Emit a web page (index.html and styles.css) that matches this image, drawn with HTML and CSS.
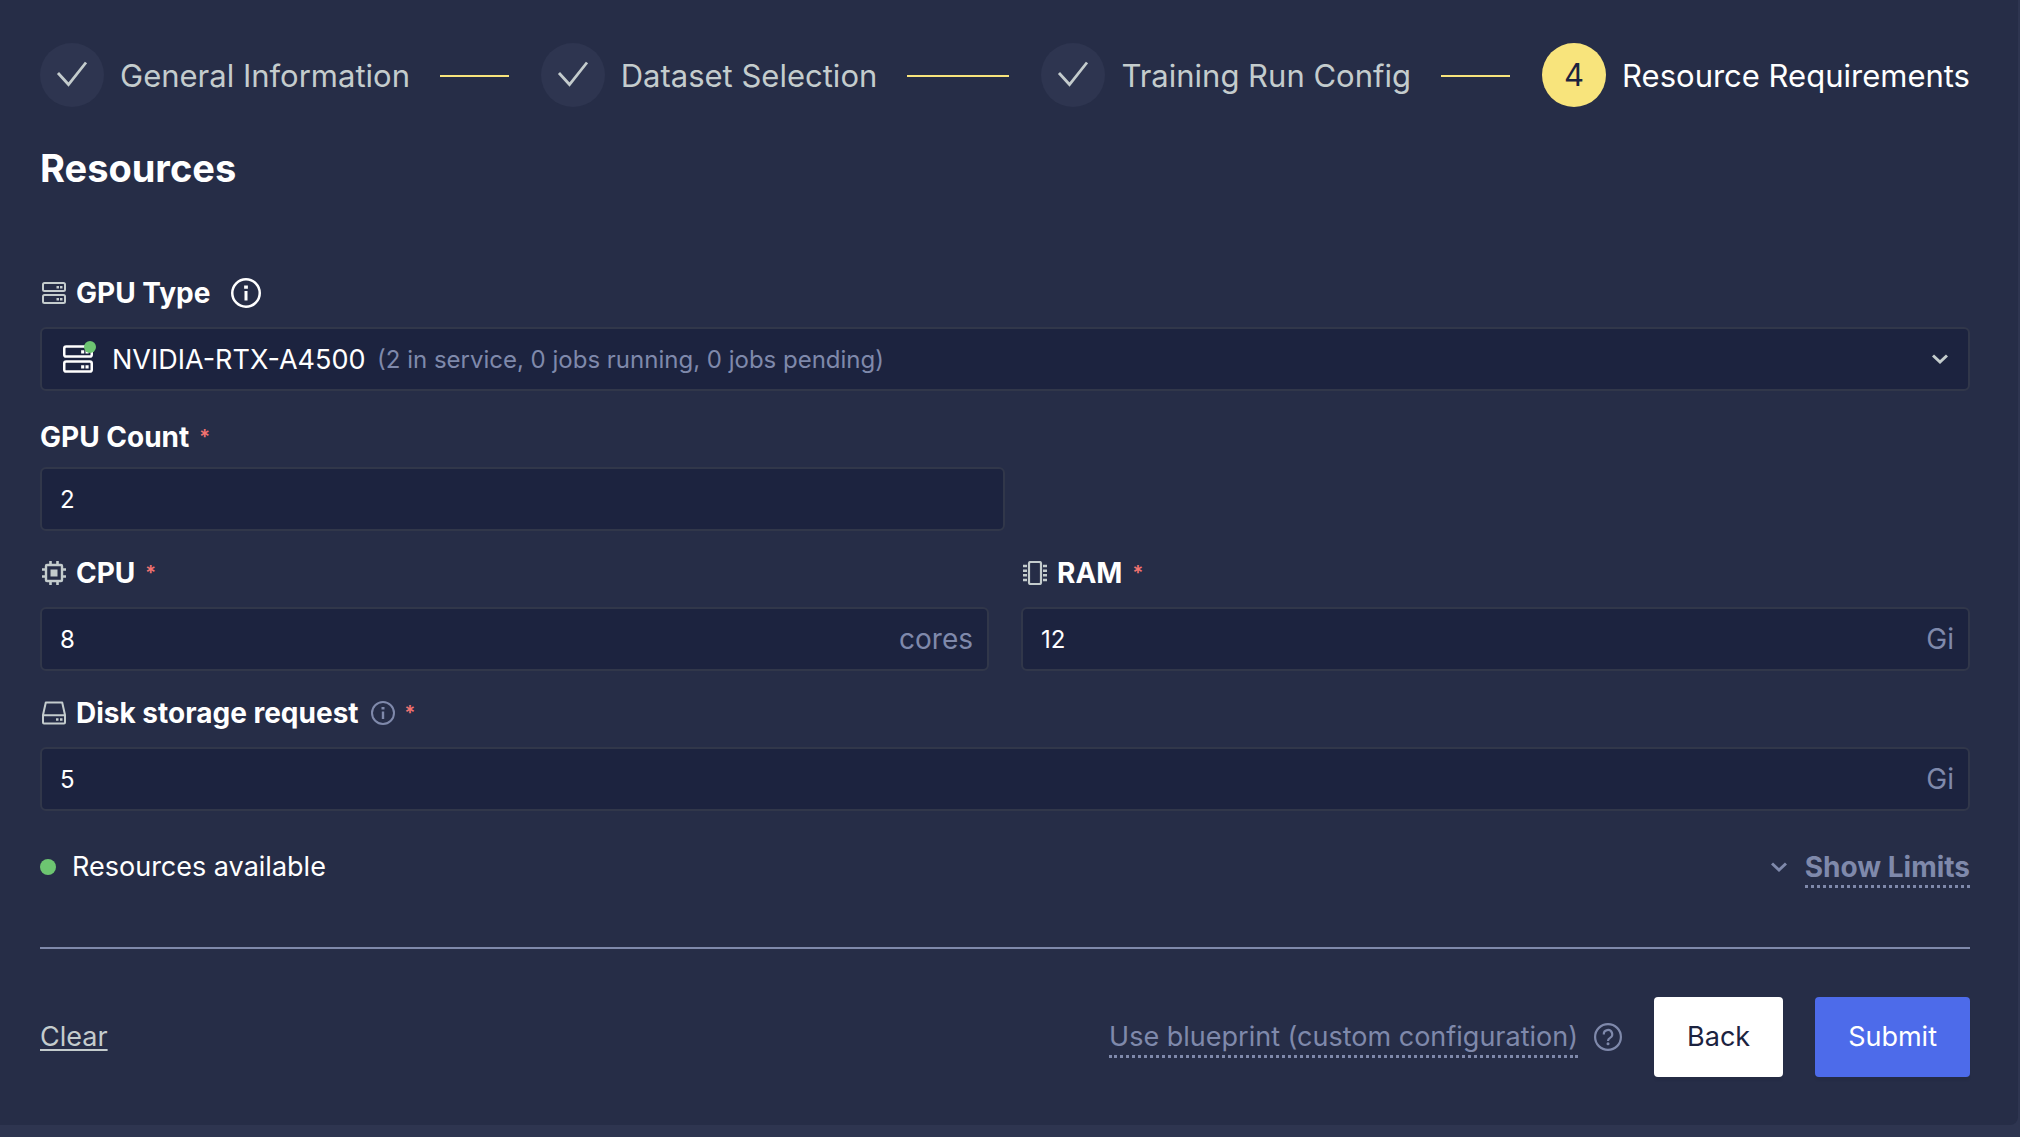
FILE: index.html
```html
<!DOCTYPE html>
<html lang="en">
<head>
<meta charset="utf-8">
<title>Resource Requirements</title>
<link rel="stylesheet" href="styles.css">
</head>
<body>
<svg class="sprite" aria-hidden="true">
  <symbol id="check" viewBox="0 0 32 32"><path d="M2 14 12.500 25.500 30 3.500" fill="none" stroke="currentColor" stroke-width="2.800"/></symbol>
  <symbol id="server" viewBox="0 0 24 24"><g fill="none" stroke="currentColor" stroke-width="2"><rect x="1" y="2" width="22" height="8" rx="1.500"/><rect x="1" y="14" width="22" height="8" rx="1.500"/></g><path fill="currentColor" d="M14.500 5h2.500v2.500h-2.500zM18 5h2.500v2.500H18zM14.500 17h2.500v2.500h-2.500zM18 17h2.500v2.500H18z"/></symbol>
  <symbol id="info" viewBox="0 0 24 24"><circle cx="12" cy="12" r="11" fill="none" stroke="currentColor" stroke-width="2"/><path fill="currentColor" d="M10.500 6h3v2.500h-3zM10.800 10.400h2.400V18h-2.400z"/></symbol>
  <symbol id="cpu" viewBox="0 0 24 24"><rect x="4" y="4" width="16" height="16" rx="1" fill="none" stroke="currentColor" stroke-width="2.400"/><path fill="currentColor" d="M8.500 8.500h7v7h-7z"/><path d="M8.500 0v4M15.500 0v4M8.500 20v4M15.500 20v4M0 8.500h4M0 15.500h4M20 8.500h4M20 15.500h4" stroke="currentColor" stroke-width="2.600"/></symbol>
  <symbol id="ram" viewBox="0 0 24 24"><rect x="6" y="1" width="12" height="22" rx="1.500" fill="none" stroke="currentColor" stroke-width="2.200"/><path d="M0 5h4M0 9.700h4M0 14.300h4M0 19h4M20 5h4M20 9.700h4M20 14.300h4M20 19h4" stroke="currentColor" stroke-width="2.400"/></symbol>
  <symbol id="disk" viewBox="0 0 24 24"><path d="M3.800 1.500h16.400L23 14v7.500a1 1 0 0 1-1 1H2a1 1 0 0 1-1-1V14zM1 14.300h22" fill="none" stroke="currentColor" stroke-width="2" stroke-linejoin="round"/><path fill="currentColor" d="M14 17.200h2.500v2.500H14zM18 17.200h2.500v2.500H18z"/></symbol>
  <symbol id="chevron" viewBox="0 0 16 16"><path d="M1 4.500 8 11l7-6.500" fill="none" stroke="currentColor" stroke-width="3"/></symbol>
  <symbol id="help" viewBox="0 0 28 28"><circle cx="14" cy="14" r="12.900" fill="none" stroke="currentColor" stroke-width="2.200"/><path d="M9.800 11.500a4.200 4.200 0 1 1 6.200 3.400q-2 1-2 3" fill="none" stroke="currentColor" stroke-width="2.200"/><circle cx="14" cy="20.800" r="1.500" fill="currentColor"/></symbol>
</svg>
<main class="card">
  <ol class="steps">
    <li class="step"><span class="badge"><svg class="i32"><use href="#check"/></svg></span><span>General Information</span></li>
    <li class="step"><span class="badge"><svg class="i32"><use href="#check"/></svg></span><span>Dataset Selection</span></li>
    <li class="step"><span class="badge"><svg class="i32"><use href="#check"/></svg></span><span>Training Run Config</span></li>
    <li class="step current" aria-current="step"><span class="badge">4</span><span>Resource Requirements</span></li>
  </ol>
  <h1>Resources</h1>
  <form>
    <div class="field">
      <div class="label"><svg class="i24"><use href="#server"/></svg><label for="gpu-type">GPU Type</label><svg class="i30"><use href="#info"/></svg></div>
      <div class="box select">
        <span class="gpu"><svg class="i30"><use href="#server"/></svg><i class="online"></i></span>
        <select id="gpu-type"><option>NVIDIA-RTX-A4500</option></select>
        <span class="meta">(2 in service, 0 jobs running, 0 jobs pending)</span>
        <svg class="i16 caret"><use href="#chevron"/></svg>
      </div>
    </div>
    <div class="field half">
      <div class="label"><label for="gpu-count">GPU Count</label><span class="req">*</span></div>
      <div class="box"><input id="gpu-count" type="text" inputmode="numeric" value="2"></div>
    </div>
    <div class="pair">
      <div class="field">
        <div class="label"><svg class="i24"><use href="#cpu"/></svg><label for="cpu-cores">CPU</label><span class="req">*</span></div>
        <div class="box"><input id="cpu-cores" type="text" inputmode="numeric" value="8"><span class="unit">cores</span></div>
      </div>
      <div class="field">
        <div class="label"><svg class="i24"><use href="#ram"/></svg><label for="ram-size">RAM</label><span class="req">*</span></div>
        <div class="box"><input id="ram-size" type="text" inputmode="numeric" value="12"><span class="unit">Gi</span></div>
      </div>
    </div>
    <div class="field">
      <div class="label"><svg class="i24"><use href="#disk"/></svg><label for="disk-size">Disk storage request</label><svg class="i24 dim"><use href="#info"/></svg><span class="req">*</span></div>
      <div class="box"><input id="disk-size" type="text" inputmode="numeric" value="5"><span class="unit">Gi</span></div>
    </div>
    <div class="status">
      <span class="available"><i class="dot"></i>Resources available</span>
      <button type="button" class="limits"><svg class="i16"><use href="#chevron"/></svg><span class="dotted">Show Limits</span></button>
    </div>
    <div class="actions">
      <a class="clear" href="#">Clear</a>
      <a class="dotted" href="#">Use blueprint (custom configuration)</a>
      <svg class="i28 help"><use href="#help"/></svg>
      <button type="button" class="btn back">Back</button>
      <button type="submit" class="btn submit">Submit</button>
    </div>
  </form>
</main>
</body>
</html>
```
FILE: styles.css
```css
* { box-sizing: border-box; }
body {
  margin: 0;
  background: #2e3550;
  color: #fff;
  font: 27px/44px Inter, "Liberation Sans", sans-serif;
}
svg { flex: none; display: block; }
.sprite { display: none; }
.i16 { width: 16px; height: 16px; }
.i24 { width: 24px; height: 24px; }
.i28 { width: 28px; height: 28px; }
.i30 { width: 30px; height: 30px; }
.i32 { width: 32px; height: 32px; }

.card {
  margin-right: 2px;
  padding: 43px 48px 48px 40px;
  background: #262d47;
  border-bottom-right-radius: 8px;
}

.steps {
  display: flex;
  margin: 0;
  padding: 0;
  list-style: none;
  font-size: 31px;
  color: #c4cccd;
}
.step {
  flex: 1 1 0;
  display: flex;
  align-items: center;
  gap: 16px;
  white-space: nowrap;
}
.step::after {
  content: "";
  flex: 1;
  height: 2px;
  margin: 2px 32px 0 14px;
  background: #f8e47c;
}
.step > span:last-child { padding-top: 2px; }
.step.current { flex: none; color: #fff; }
.step.current::after { display: none; }
.badge {
  display: flex;
  align-items: center;
  justify-content: center;
  width: 64px;
  height: 64px;
  border-radius: 50%;
  background: #2e3550;
}
.current .badge { background: #f8e47c; color: #1c233f; }

h1 { margin: 33px 0 75px; font-size: 38px; line-height: 56px; font-weight: 700; }

.label {
  display: flex;
  align-items: center;
  gap: 10px;
  height: 44px;
  margin-bottom: 12px;
  padding-left: 2px;
  font-size: 28px;
  font-weight: 700;
}
.label > svg { color: #c4cccd; }
.label > .i30 { margin-left: 11px; color: #fff; }
.label > .dim { margin-left: 2px; color: #7f89ab; }
.req { color: #f37370; font-size: 20px; font-weight: 600; }
.field { margin-bottom: 20px; }
.half { width: 50%; margin-top: 24px; }
.half .label { margin-bottom: 8px; padding-left: 0; }
.pair { display: grid; grid-template-columns: 1fr 1fr; gap: 32px; }

.box {
  display: flex;
  align-items: center;
  height: 64px;
  padding: 0 14px 0 18px;
  border: 2px solid #31374a;
  border-radius: 6px;
  background: #1c233f;
}
.box input {
  flex: 1;
  min-width: 0;
  padding: 2px 0 0;
  border: 0;
  outline: 0;
  background: none;
  color: #fff;
  font: 24px/44px Inter, "Liberation Sans", sans-serif;
}
.unit { color: #7f89ab; font-size: 28px; }
.select { padding: 0 20px; }
.gpu { position: relative; margin: 0 19px 0 1px; }
.online {
  position: absolute;
  top: -3px;
  right: -3px;
  width: 12px;
  height: 12px;
  border-radius: 50%;
  background: #6dc571;
}
.box select {
  appearance: none;
  padding: 2px 0 0;
  border: 0;
  outline: 0;
  background: none;
  color: #fff;
  font: inherit;
}
.meta { margin-left: 11px; padding-top: 2px; color: #7f89ab; font-size: 24px; }
.caret { margin-left: auto; color: #c4cccd; }

.status {
  display: flex;
  align-items: center;
  justify-content: space-between;
  margin-top: 34px;
  padding-bottom: 58px;
  border-bottom: 2px solid #7f89ab;
}
.available { display: flex; align-items: center; gap: 16px; }
.dot { width: 16px; height: 16px; border-radius: 50%; background: #6dc571; }
.limits {
  display: flex;
  align-items: center;
  gap: 18px;
  padding: 0;
  border: 0;
  background: none;
  color: #7f89ab;
  font-family: inherit;
  font-size: 28px;
  font-weight: 700;
}
.dotted {
  padding-top: 2px;
  line-height: 36px;
  border-bottom: 3px dotted #7f89ab;
  color: #7f89ab;
  text-decoration: none;
}

.actions { display: flex; align-items: center; margin-top: 48px; }
.clear { margin-right: auto; color: #c4cccd; text-underline-offset: 3px; }
.help { margin: 0 32px 0 16px; color: #7f89ab; }
.btn {
  height: 80px;
  padding: 0 33px;
  border: 0;
  border-radius: 4px;
  box-shadow: 0 4px 2px rgba(0, 0, 0, 0.04);
  font: inherit;
}
.back { background: #fff; color: #1c233f; }
.submit { margin-left: 32px; background: #4d6bea; color: #fff; }
```
